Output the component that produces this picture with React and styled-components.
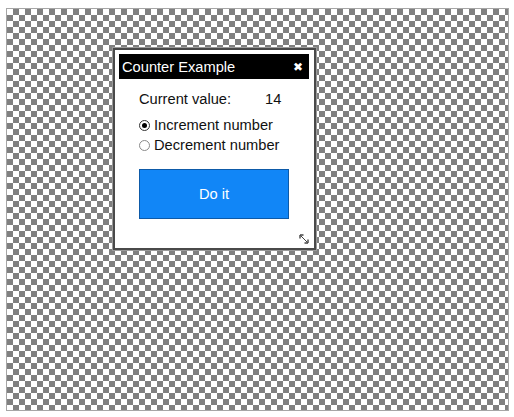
import { useState } from "react";
import styled, { createGlobalStyle } from "styled-components";

const Global = createGlobalStyle`
  html, body { margin: 0; padding: 0; background: #fff; }
  body { font-family: "Liberation Sans", Arial, sans-serif; }
`;

const Canvas = styled.div`
  margin: 8px 6px;
  box-sizing: border-box;
  width: 503px;
  height: 403px;
  border: 1px solid #a6a6a6;
  background-color: #fff;
  background-image: conic-gradient(#808080 25%, #fff 0 50%, #808080 0 75%, #fff 0);
  background-size: 12px 12px;
  padding: 39px 0 0 106px;
`;

const Window = styled.div`
  position: relative;
  width: 203px;
  height: 202px;
  box-sizing: border-box;
  background: #fff;
  border: 2px solid #4a4a4a;
  box-shadow: 0 0 0 1px #9a9a9a;
  padding: 4px 5px 0 4px;
`;

const TitleBar = styled.div`
  height: 25px;
  background: #000;
  color: #fff;
  display: flex;
  align-items: center;
  justify-content: space-between;
  padding: 0 6px 0 3px;
  font-size: 14.667px;
`;

const Close = styled.span`
  font-family: "DejaVu Sans", sans-serif;
  font-size: 12px;
  line-height: 1;
  cursor: pointer;
`;

const Body = styled.div`
  padding: 10px 0 0 20px;
  font-size: 14.667px;
  color: #111;
`;

const ValueRow = styled.div`
  display: flex;
  height: 20px;
  align-items: center;
`;

const Label = styled.span`
  width: 126px;
`;

const Options = styled.div`
  margin-top: 6px;
  display: flex;
  flex-direction: column;
`;

const Option = styled.label`
  display: flex;
  align-items: center;
  gap: 4px;
  height: 20px;
  cursor: pointer;
`;

const Radio = styled.span`
  width: 9px;
  height: 9px;
  border-radius: 50%;
  border: 1px solid ${({ $on }) => ($on ? "#333" : "#8a8a8a")};
  display: flex;
  align-items: center;
  justify-content: center;
  &::after {
    content: "";
    width: 5px;
    height: 5px;
    border-radius: 50%;
    background: ${({ $on }) => ($on ? "#000" : "transparent")};
  }
`;

const Button = styled.button`
  margin-top: 14px;
  width: 150px;
  height: 50px;
  background: #1186f7;
  border: 1px solid #0d5aa8;
  color: #fff;
  font-family: "Liberation Sans", Arial, sans-serif;
  font-size: 14.667px;
  cursor: pointer;
`;

const Resize = styled.svg`
  position: absolute;
  right: 5px;
  bottom: 4px;
`;

export default function App() {
  const [value, setValue] = useState(14);
  const [mode, setMode] = useState("inc");

  return (
    <>
      <Global />
      <Canvas>
        <Window>
          <TitleBar>
            <span>Counter Example</span>
            <Close>✖</Close>
          </TitleBar>
          <Body>
            <ValueRow>
              <Label>Current value:</Label>
              <span>{value}</span>
            </ValueRow>
            <Options>
              <Option onClick={() => setMode("inc")}>
                <Radio $on={mode === "inc"} />
                Increment number
              </Option>
              <Option onClick={() => setMode("dec")}>
                <Radio $on={mode === "dec"} />
                Decrement number
              </Option>
            </Options>
            <Button onClick={() => setValue((v) => (mode === "inc" ? v + 1 : v - 1))}>
              Do it
            </Button>
          </Body>
          <Resize width="10" height="10" viewBox="0 0 10 10">
            <path d="M1.5 1.5 L8.5 8.5" stroke="#444" strokeWidth="1" />
            <path d="M1 1 L1 4.5 M1 1 L4.5 1" stroke="#444" strokeWidth="1.4" />
            <path d="M9 9 L9 5.5 M9 9 L5.5 9" stroke="#444" strokeWidth="1.4" />
          </Resize>
        </Window>
      </Canvas>
    </>
  );
}
